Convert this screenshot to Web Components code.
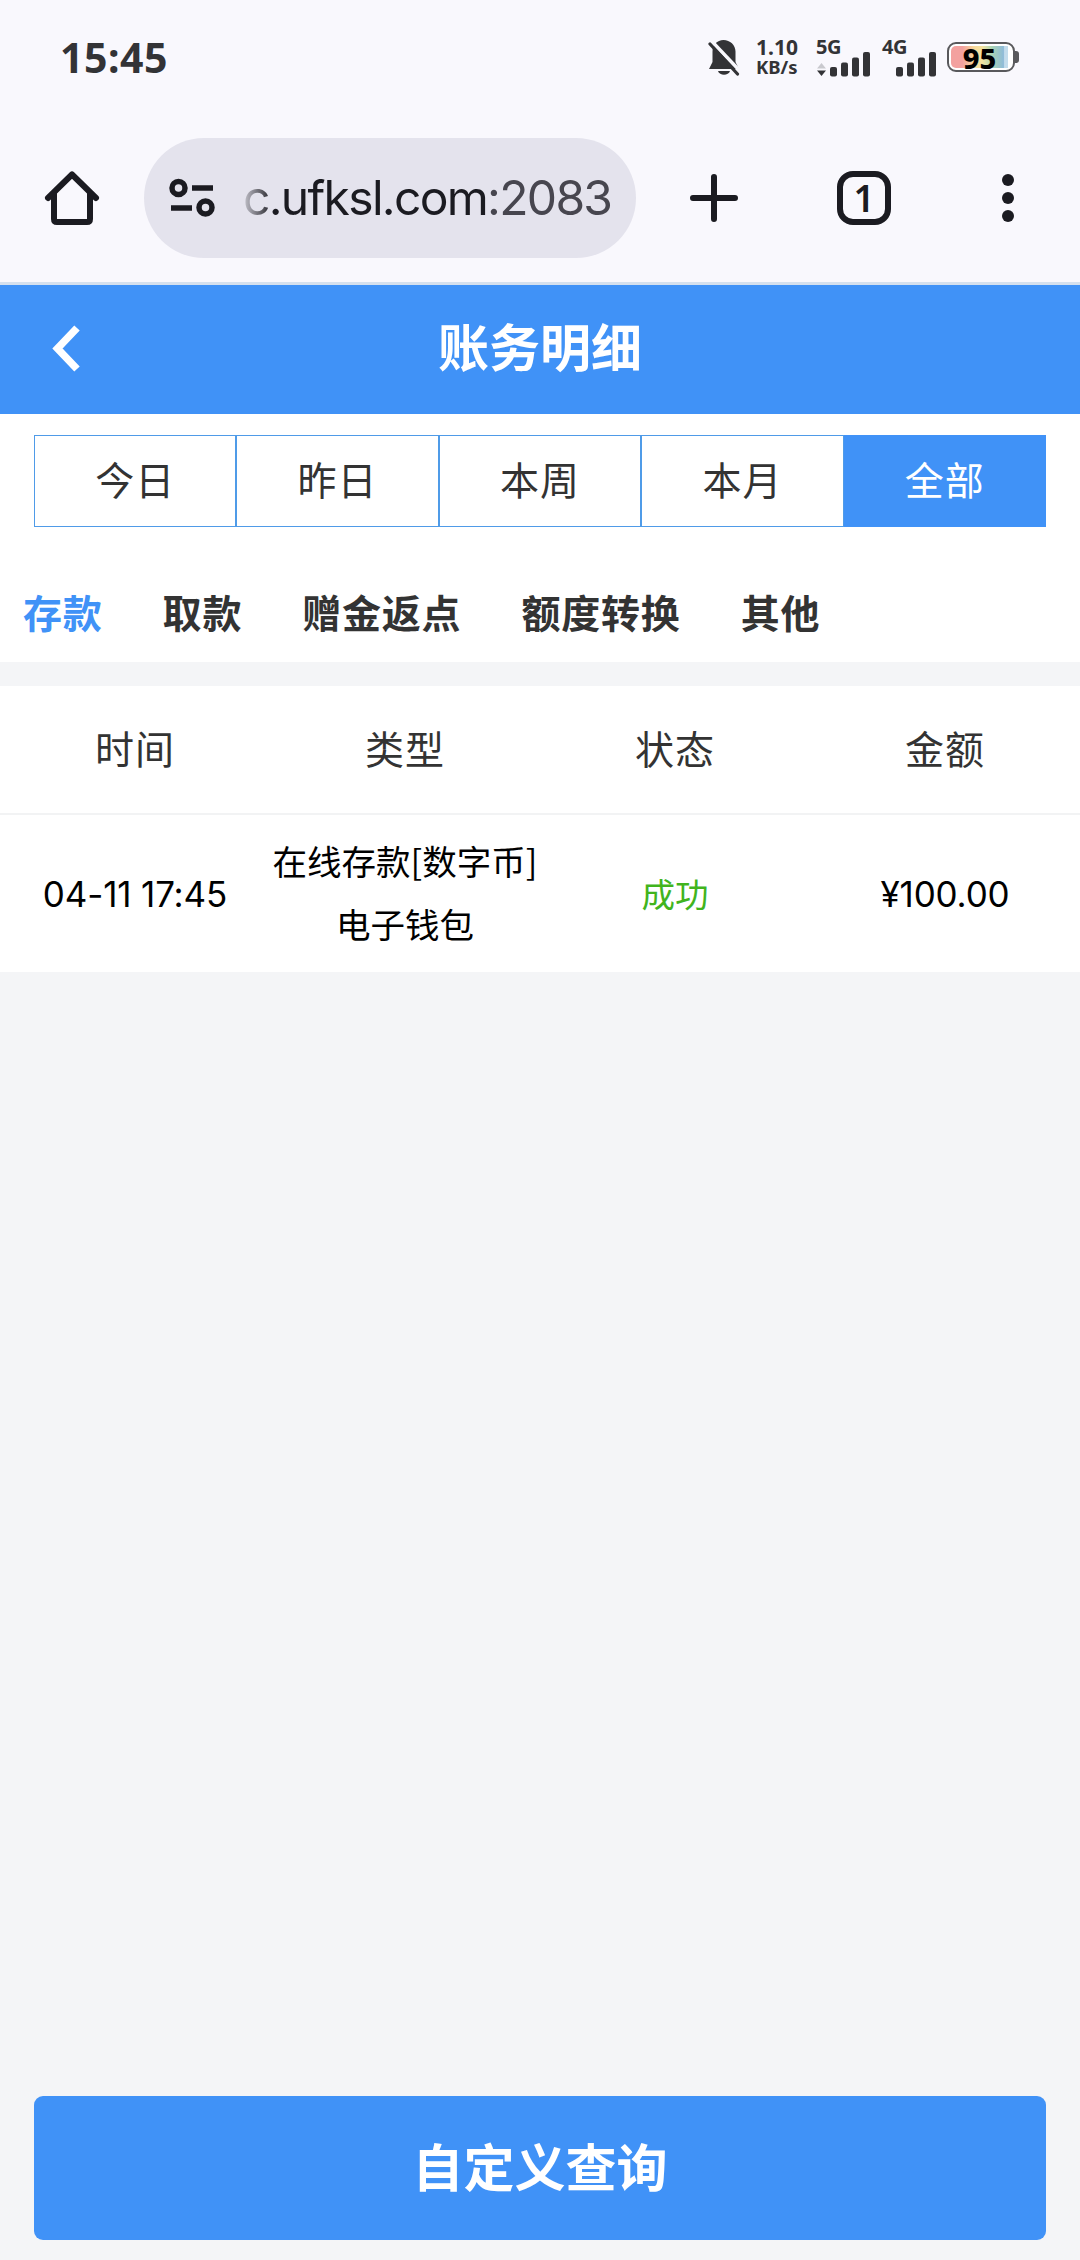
<!DOCTYPE html>
<html lang="zh-CN">
<head>
<meta charset="utf-8">
<meta name="viewport" content="width=device-width, initial-scale=1">
<title>账务明细</title>
<style>
  html, body {
    margin: 0;
    height: 100%;
  }
  body {
    --brand: #4092f7;
    --text: #333;
    --page: #f4f5f7;
    font-family: "Noto Sans CJK SC", sans-serif;
    color: var(--text);
    background: var(--page);
  }
</style>
</head>
<body>

<account-app>
  <status-bar slot="chrome" time="15:45" battery="95"></status-bar>
  <browser-toolbar slot="chrome" tabs="1">c.ufksl.com<span slot="port">:2083</span></browser-toolbar>

  <page-header>账务明细</page-header>

  <range-tabs>
    <range-tab>今日</range-tab>
    <range-tab>昨日</range-tab>
    <range-tab>本周</range-tab>
    <range-tab>本月</range-tab>
    <range-tab selected>全部</range-tab>
  </range-tabs>

  <category-tabs>
    <category-tab selected>存款</category-tab>
    <category-tab>取款</category-tab>
    <category-tab>赠金返点</category-tab>
    <category-tab>额度转换</category-tab>
    <category-tab>其他</category-tab>
  </category-tabs>

  <records-table></records-table>

  <query-button slot="footer">自定义查询</query-button>
</account-app>

<script>

  /**
   * BaseElement
   *  - Attaches an open shadow root with the markup of the class
   */
  class BaseElement extends HTMLElement {

    static markup = '';

    constructor() {
      super();
      const template = document.createElement('template');
      template.innerHTML = this.constructor.markup;
      this.attachShadow({mode: 'open'}).append(template.content.cloneNode(true));
    }

  }

  // APP LAYOUT //
  customElements.define('account-app', class extends BaseElement {
    static markup = `
      <style>
        :host {
          display: flex;
          flex-direction: column;
          height: 2260px;
          overflow: hidden;
        }
        main {
          flex: 1 1 auto;
        }
        footer {
          padding: 0 34px 20px 34px;
        }
      </style>
      <slot name="chrome"></slot>
      <main><slot></slot></main>
      <footer><slot name="footer"></slot></footer>
    `;
  });

  // SIGNAL BARS //
  customElements.define('signal-bars', class extends BaseElement {
    static markup = `
      <style>
        :host {
          display: flex;
          flex-direction: column;
          width: 56px;
          color: #333336;
        }
        .network {
          font: 700 20px/16px "Noto Sans", sans-serif;
          height: 12px;
          letter-spacing: -0.5px;
        }
        svg {
          display: block;
          fill: currentColor;
        }
        .traffic {
          visibility: hidden;
        }
        :host([traffic]) .traffic {
          visibility: visible;
        }
      </style>
      <div class="network"><slot></slot></div>
      <svg width="56" height="26" viewBox="0 0 56 26">
        <g class="traffic">
          <path d="M1 17.5L5.5 12L10 17.5Z" fill="#c9c9ce"/>
          <path d="M1 19.5H10L5.5 25Z"/>
        </g>
        <rect x="14" y="16" width="7" height="9.5" rx="2"/>
        <rect x="25" y="11.5" width="7" height="14" rx="2"/>
        <rect x="36" y="6.5" width="7" height="19" rx="2"/>
        <rect x="47" y="1" width="7" height="24.5" rx="2"/>
      </svg>
    `;
  });

  // STATUS BAR //
  customElements.define('status-bar', class extends BaseElement {
    static markup = `
      <style>
        :host {
          display: flex;
          align-items: center;
          box-sizing: border-box;
          height: 116px;
          padding: 0 61px 0 60px;
          background: #f9f8fd;
          color: #333336;
          font-family: "Noto Sans", sans-serif;
          font-weight: 700;
        }
        .time {
          flex: 1 1 auto;
          padding-bottom: 2px;
          font-size: 41px;
          letter-spacing: 0.5px;
          line-height: 56px;
        }
        .icons {
          display: flex;
          align-items: flex-start;
          height: 38px;
        }
        .bell {
          margin-right: 16px;
        }
        .speed {
          width: 60px;
          margin-top: -2px;
          font-size: 18.5px;
          line-height: 20px;
          white-space: pre-line;
        }
        .speed::first-line {
          font-size: 21px;
        }
        signal-bars + signal-bars {
          margin-left: 10px;
        }
        .battery {
          display: flex;
          align-items: center;
          margin: 3px 0 0 9px;
        }
        .cell {
          box-sizing: border-box;
          width: 68px;
          height: 30px;
          padding: 2px 5px 2px 2px;
          border: 2px solid #59595c;
          border-radius: 9px;
          background: #fff;
        }
        .level {
          display: flex;
          align-items: center;
          justify-content: center;
          height: 22px;
          border-radius: 5px 0 0 5px;
          background: linear-gradient(90deg, #f3a19f 0 20%, #f8d99a 40%, #f4e3a0 55%, #a8d3b4 72%, #8fbbd8 92%, #c3dcec 94%);
          color: #000;
          font-size: 29px;
          font-weight: 800;
        }
        .nub {
          width: 4px;
          height: 12px;
          border-radius: 0 3px 3px 0;
          background: #59595c;
        }
      </style>
      <div class="time"></div>
      <div class="icons">
        <svg class="bell" width="32" height="38" viewBox="0 0 32 38">
          <path d="M15.5 1C9 1 4.5 6 4.5 12.5V23L1 30H31L27.5 23V12.5C27.5 6 22 1 15.5 1Z" fill="#333336"/>
          <path d="M10 32H22C20.5 37 11.5 37 10 32Z" fill="#333336"/>
          <path d="M3.5 2L33 33" stroke="#f9f8fd" stroke-width="3.5"/>
          <path d="M2 5L29.5 35" stroke="#333336" stroke-width="3.2" stroke-linecap="round"/>
        </svg>
        <div class="speed">1.10\nKB/s</div>
        <signal-bars traffic>5G</signal-bars>
        <signal-bars>4G</signal-bars>
        <div class="battery">
          <div class="cell"><div class="level"></div></div>
          <div class="nub"></div>
        </div>
      </div>
    `;

    connectedCallback() {
      this.shadowRoot.querySelector('.time').textContent = this.getAttribute('time');
      this.shadowRoot.querySelector('.level').textContent = this.getAttribute('battery');
    }
  });

  // BROWSER TOOLBAR //
  customElements.define('browser-toolbar', class extends BaseElement {
    static markup = `
      <style>
        :host {
          display: flex;
          align-items: center;
          box-sizing: border-box;
          height: 169px;
          padding: 0 42px 2px 42px;
          border-bottom: 3px solid #d5e0ee;
          background: #f9f8fd;
          color: #1b1b21;
        }
        svg {
          display: block;
          flex: none;
          fill: none;
          stroke: currentColor;
          stroke-width: 6;
        }
        .address {
          display: flex;
          align-items: center;
          box-sizing: border-box;
          width: 492px;
          height: 120px;
          margin: 0 51px 0 42px;
          padding-left: 24px;
          border-radius: 60px;
          background: #e4e3ed;
        }
        .address svg {
          stroke-width: 5.5;
        }
        .url {
          margin-left: 27px;
          font: 400 48px/60px Inter, sans-serif;
          letter-spacing: -1.7px;
          white-space: nowrap;
          -webkit-mask-image: linear-gradient(90deg, rgba(0, 0, 0, 0.15), #000 30px);
          mask-image: linear-gradient(90deg, rgba(0, 0, 0, 0.15), #000 30px);
        }
        .port {
          color: #47464f;
        }
        .tabs {
          display: flex;
          align-items: center;
          justify-content: center;
          box-sizing: border-box;
          width: 54px;
          height: 54px;
          margin: 0 87px 0 96px;
          border: 6px solid currentColor;
          border-radius: 16px;
          font: 600 37px/40px "Noto Sans", sans-serif;
        }
      </style>
      <svg width="60" height="60" viewBox="0 0 60 60" stroke-linejoin="round" stroke-linecap="round">
        <path d="M6 30L30 6.5L54 30M12 25V51Q12 54 15 54H45Q48 54 48 51V25"/>
      </svg>
      <div class="address">
        <svg width="48" height="42" viewBox="0 0 48 42">
          <circle cx="10.5" cy="11" r="6.5"/>
          <path d="M24 11H45M3 31H24"/>
          <circle cx="37.5" cy="30.5" r="6.5"/>
        </svg>
        <div class="url"><slot></slot><span class="port"><slot name="port"></slot></span></div>
      </div>
      <svg width="54" height="54" viewBox="0 0 54 54" stroke-linecap="round">
        <path d="M27 6V48M6 27H48"/>
      </svg>
      <div class="tabs"></div>
      <svg width="60" height="54" viewBox="0 0 60 54" style="fill: currentColor; stroke: none;">
        <circle cx="30" cy="9" r="6"/>
        <circle cx="30" cy="27" r="6"/>
        <circle cx="30" cy="45" r="6"/>
      </svg>
    `;

    connectedCallback() {
      this.shadowRoot.querySelector('.tabs').textContent = this.getAttribute('tabs');
    }
  });

  // PAGE HEADER //
  customElements.define('page-header', class extends BaseElement {
    static markup = `
      <style>
        :host {
          display: grid;
          grid-template-columns: 132px 1fr 132px;
          align-items: center;
          height: 129px;
          background: var(--brand);
          color: #fff;
        }
        svg {
          margin: 0 0 2px 49px;
        }
        h1 {
          margin: 0;
          padding-bottom: 10px;
          font-size: 51px;
          font-weight: 700;
          line-height: 72px;
          text-align: center;
        }
      </style>
      <svg width="34" height="50" viewBox="0 0 34 50" fill="none" stroke="currentColor" stroke-width="7.5">
        <path d="M28 4L8.5 24.5L28 45"/>
      </svg>
      <h1><slot></slot></h1>
    `;
  });

  // DATE RANGE //
  customElements.define('range-tabs', class extends BaseElement {
    static markup = `
      <style>
        :host {
          display: grid;
          grid-template-columns: repeat(5, 1fr);
          padding: 21px 34px 0 34px;
          background: #fff;
        }
      </style>
      <slot></slot>
    `;
  });

  customElements.define('range-tab', class extends BaseElement {
    static markup = `
      <style>
        :host {
          display: block;
          box-sizing: border-box;
          height: 92px;
          border: 1px solid #4f9be8;
          font-size: 39px;
          letter-spacing: 1px;
          line-height: 85px;
          text-align: center;
        }
        :host([selected]) {
          border-color: var(--brand);
          background: var(--brand);
          color: #fff;
        }
      </style>
      <slot></slot>
    `;
  });

  // CATEGORIES //
  customElements.define('category-tabs', class extends BaseElement {
    static markup = `
      <style>
        :host {
          display: flex;
          gap: 60px;
          height: 135px;
          padding-left: 23px;
          background: #fff;
        }
      </style>
      <slot></slot>
    `;
  });

  customElements.define('category-tab', class extends BaseElement {
    static markup = `
      <style>
        :host {
          display: block;
          font-size: 39px;
          font-weight: 700;
          letter-spacing: 0.8px;
          line-height: 169px;
        }
        :host([selected]) {
          color: var(--brand);
        }
      </style>
      <slot></slot>
    `;
  });

  // RECORDS //
  customElements.define('records-table', class extends BaseElement {
    static markup = `
      <style>
        :host {
          display: block;
          margin-top: 24px;
          background: #fff;
        }
        .row {
          display: grid;
          grid-template-columns: repeat(4, 1fr);
          align-items: center;
          text-align: center;
        }
        .head {
          box-sizing: border-box;
          height: 129px;
          padding-bottom: 5px;
          border-bottom: 2px solid #f2f3f4;
          font-size: 39px;
          letter-spacing: 1px;
        }
        .record {
          box-sizing: border-box;
          height: 157px;
          padding-bottom: 3px;
          color: #000;
          font-size: 34.5px;
          line-height: 63px;
          white-space: nowrap;
        }
        .number {
          padding-top: 4px;
          font-family: Inter, sans-serif;
          font-size: 35px;
          letter-spacing: -0.15px;
        }
        .success {
          color: #41b41d;
          font-size: 33.5px;
        }
      </style>
      <div class="row head">
        <div>时间</div><div>类型</div><div>状态</div><div>金额</div>
      </div>
      <div class="body"></div>
    `;

    records = [
      {time: '04-11 17:45', type: ['在线存款[数字币]', '电子钱包'], status: '成功', amount: '¥100.00'}
    ];

    connectedCallback() {
      this.shadowRoot.querySelector('.body').innerHTML = this.records.map(({time, type, status, amount}) => `
        <div class="row record">
          <div class="number">${ time }</div>
          <div>${ type.join('<br>') }</div>
          <div class="success">${ status }</div>
          <div class="number">${ amount }</div>
        </div>
      `).join('');
    }
  });

  // QUERY BUTTON //
  customElements.define('query-button', class extends BaseElement {
    static markup = `
      <style>
        :host {
          display: block;
        }
        button {
          display: block;
          width: 100%;
          height: 144px;
          padding: 0 0 6px 0;
          border: 0;
          border-radius: 9px;
          background: var(--brand);
          color: #fff;
          font: inherit;
          font-size: 51px;
          font-weight: 700;
        }
      </style>
      <button type="button"><slot></slot></button>
    `;
  });

</script>
</body>
</html>
